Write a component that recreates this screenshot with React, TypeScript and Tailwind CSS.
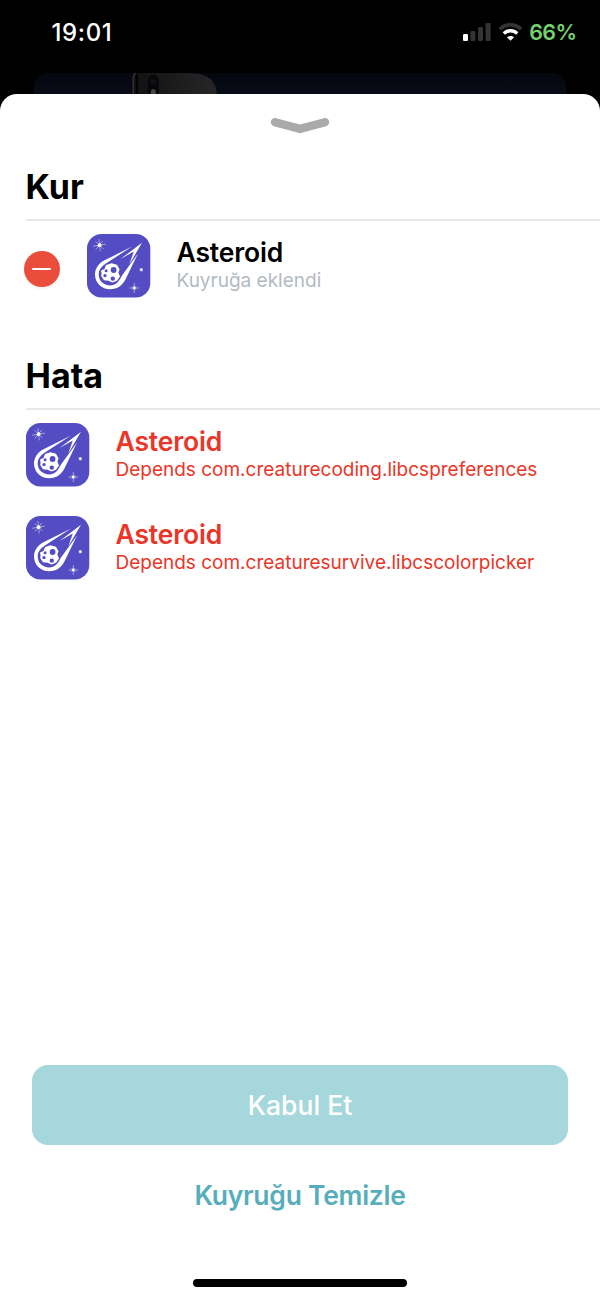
type QueueItem = {
  name: string;
  detail: string;
};

const installs: QueueItem[] = [{ name: "Asteroid", detail: "Kuyruğa eklendi" }];

const errors: QueueItem[] = [
  { name: "Asteroid", detail: "Depends com.creaturecoding.libcspreferences" },
  { name: "Asteroid", detail: "Depends com.creaturesurvive.libcscolorpicker" },
];

function AsteroidIcon() {
  return (
    <svg viewBox="0 0 64 64" className="size-16 shrink-0">
      <rect x="0" y="0.1" width="63.3" height="63.3" rx="14.5" fill="#544cc2" />
      <g fill="#fff">
        {/* comet outline */}
        <path d="M45 12.6 L17 26.6 C11 30 8 35 8 40.3 C8 49 14.5 55.3 23.3 55.3 C30.5 55.3 35.5 51.5 38.7 45 L51 19.5 L35 41.5 C31.8 48 28.5 51.5 23.3 51.5 C16.5 51.5 11.7 46.8 11.7 40.3 C11.7 36.3 14 32.8 18.5 29.8 Z" />
        <path d="M55 8.8 L33.5 25 L46.8 17.6 L42.3 30.5 Z" />
        {/* rock */}
        <path
          fillRule="evenodd"
          d="M19 31 L24.5 29.2 L30 30.8 L32.6 35.5 L31.4 38.6 L33 42.5 L30 46.8 L25.5 48.4 L21.5 46.8 L17 46.2 L14.2 42 L14.6 39.5 L14 36.5 L17.5 35 Z M29.5 36 A2.9 2.9 0 1 0 23.7 36 A2.9 2.9 0 1 0 29.5 36 Z M28 44.6 A2.2 2.2 0 1 0 23.6 44.6 A2.2 2.2 0 1 0 28 44.6 Z M20.6 36.8 A1.5 1.5 0 1 0 17.6 36.8 A1.5 1.5 0 1 0 20.6 36.8 Z M19.7 41.6 A1.7 1.7 0 1 0 16.3 41.6 A1.7 1.7 0 1 0 19.7 41.6 Z"
        />
        {/* stars */}
        <circle cx="12.6" cy="11.2" r="1.9" />
        <circle cx="47.3" cy="54" r="1.4" />
        <circle cx="54.3" cy="35.7" r="1.2" />
      </g>
      <g stroke="#fff" strokeWidth="0.6" strokeLinecap="round" opacity="0.8">
        <path d="M12 5.5 L13.2 17 M6.5 12.2 L18.5 10.2 M9 7.6 L16.2 14.8 M15.6 7.2 L9 15.2" />
        <path d="M47.3 49.4 V58.6 M42.7 54 H51.9" />
        <path d="M45.7 52.4 L48.9 55.6 M48.9 52.4 L45.7 55.6" />
      </g>
      <rect x="52.6" y="34" width="3.4" height="3.4" fill="#fff" opacity="0.35" />
    </svg>
  );
}

function StatusBar() {
  return (
    <div className="flex h-[73px] items-start justify-between pl-[51.5px] pr-[23.5px] text-white">
      <span className="mt-[18px] text-[24px] leading-[30px] font-medium tracking-[0.6px]">19:01</span>
      <div className="flex">
        <svg viewBox="0 0 28 18" className="mt-[23px] h-[18px] w-7">
          <rect x="0" y="11" width="5" height="7" rx="1.3" fill="#fff" />
          <rect x="7.4" y="8" width="5" height="10" rx="1.3" fill="#333" />
          <rect x="15" y="4" width="5" height="14" rx="1.3" fill="#333" />
          <rect x="22.6" y="0" width="5" height="18" rx="1.3" fill="#333" />
        </svg>
        <svg viewBox="0 0 25 18" className="mt-[23px] ml-[7px] h-[18px] w-[25px]" fill="none">
          <path d="M1.8 6.2 C7.8 0.4 17.2 0.4 23.2 6.2" stroke="#333" strokeWidth="3.6" />
          <path d="M5.8 10.4 C9.6 6.8 15.4 6.8 19.2 10.4" stroke="#fff" strokeWidth="3.4" />
          <path d="M12.5 17.8 L8.9 14.3 C10.9 12.5 14.1 12.5 16.1 14.3 Z" fill="#fff" />
        </svg>
        <span className="mt-[17px] ml-[6.5px] text-[21.5px] leading-[30px] font-semibold tracking-[-0.6px] text-[#73d16e]">
          66%
        </span>
      </div>
    </div>
  );
}

function BannerPeek() {
  return (
    <div className="mx-[34px] h-[42px] overflow-hidden rounded-t-[14px] bg-linear-to-b from-[#05070f] to-[#0c1220]">
      <svg viewBox="0 0 533 42" className="h-[42px] w-full">
        <defs>
          <linearGradient id="phone" x1="0" x2="1">
            <stop offset="0" stopColor="#111" />
            <stop offset="1" stopColor="#262626" />
          </linearGradient>
        </defs>
        <path d="M99 42 V5 Q99 0 104 0 H157 Q183 1 183 22 V42 Z" fill="url(#phone)" />
        <path d="M99.5 42 V4 Q100 1 102 0" stroke="#333" strokeWidth="1.5" fill="none" />
        <path d="M103 42 V1" stroke="#000" strokeWidth="2" />
        <rect x="114" y="2" width="11" height="36" rx="5" fill="#080808" />
        <circle cx="119.5" cy="9" r="3" fill="#10101a" />
        <ellipse cx="119.5" cy="20" rx="2.5" ry="4" fill="#4a4742" />
      </svg>
    </div>
  );
}

function SectionTitle({ children }: { children: string }) {
  return (
    <h2 className="ml-[26px] h-[55px] border-b-2 border-[#e7e7e8] pt-px text-[34px] leading-[40px] font-bold text-black">
      <span className="-ml-[0.5px]">{children}</span>
    </h2>
  );
}

function ItemText({ item, error }: { item: QueueItem; error?: boolean }) {
  return (
    <div className={error ? "mt-0.5 ml-[25.5px] text-[#e93628]" : "mt-0.5 ml-[25.5px] text-black"}>
      <p className="text-[26.5px] leading-8 font-semibold tracking-[-0.15px]">{item.name}</p>
      <p className={error ? "text-[19px] leading-[25px]" : "text-[19px] leading-[25px] text-[#b3bac4]"}>
        {item.detail}
      </p>
    </div>
  );
}

export default function App() {
  return (
    <div className="h-[1300px] w-[600px] overflow-hidden bg-black font-['Inter','Liberation_Sans',sans-serif]">
      <StatusBar />
      <BannerPeek />

      <main className="relative -mt-[21px] flex h-[1206px] flex-col rounded-t-[17px] bg-white">
        <svg viewBox="0 0 60 18" className="mx-auto mt-[23px] h-[18px] w-[60px] shrink-0">
          <path d="M5 5.2 L30 11.8 L55 5.2" fill="none" stroke="#aaa" strokeWidth="8.4" strokeLinecap="round" />
        </svg>

        <section className="mt-[31px]">
          <SectionTitle>Kur</SectionTitle>
          {installs.map((item) => (
            <div key={item.detail} className="flex h-[93px] pt-[13px] pl-6">
              <button className="mt-[17px] mr-[27.5px] flex size-[35.5px] items-center justify-center rounded-full bg-[#eb4d3d] shadow-[0_2px_2px_rgba(0,0,0,0.06)]">
                <span className="h-0.5 w-[19px] rounded-full bg-white" />
              </button>
              <AsteroidIcon />
              <ItemText item={item} />
            </div>
          ))}
        </section>

        <section className="mt-[41px]">
          <SectionTitle>Hata</SectionTitle>
          {errors.map((item) => (
            <div key={item.detail} className="flex h-[93px] pt-[13px] pl-[26px]">
              <AsteroidIcon />
              <ItemText item={item} error />
            </div>
          ))}
        </section>

        <footer className="mt-auto flex flex-col items-center">
          <button className="h-20 w-[536px] rounded-2xl bg-[#a5d7dd] pt-0.5 text-[26.5px] font-medium text-white">
            Kabul Et
          </button>
          <button className="mt-[34px] h-8 text-[26.5px] leading-8 font-semibold tracking-[-0.27px] text-[#56aebd]">
            Kuyruğu Temizle
          </button>
          <div className="mt-[68px] mb-[13px] h-2 w-[214px] rounded-full bg-black" />
        </footer>
      </main>
    </div>
  );
}
